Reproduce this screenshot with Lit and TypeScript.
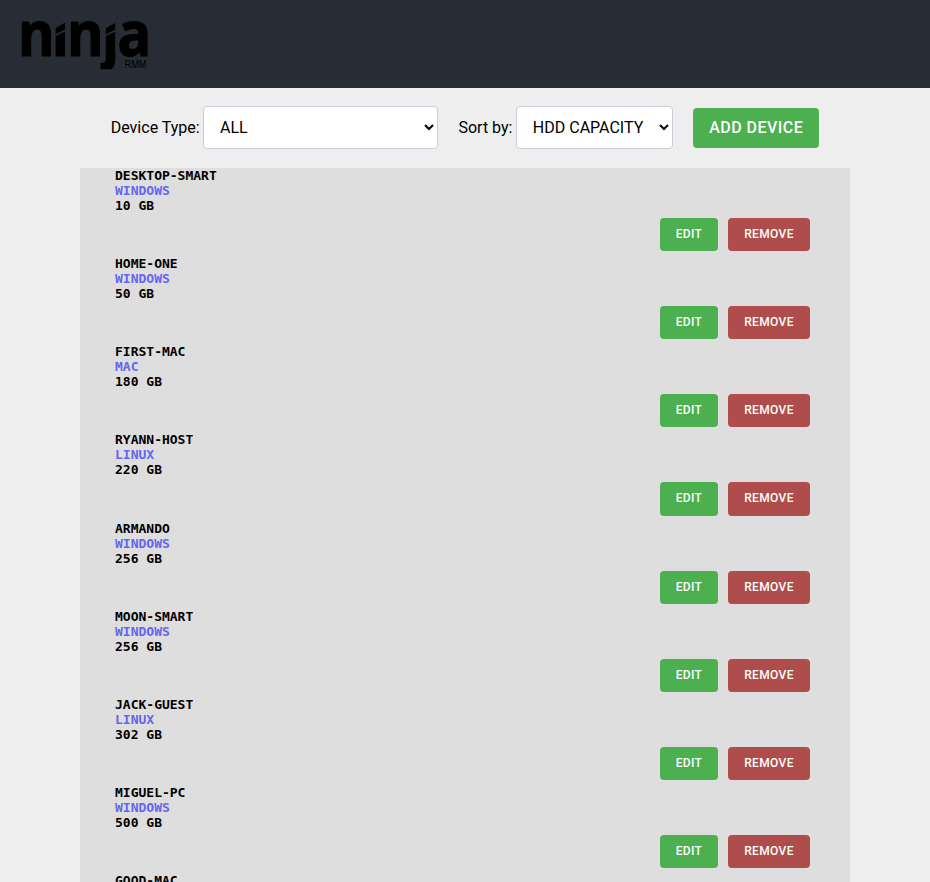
import { LitElement, html, css } from "lit";
import { customElement, property } from "lit/decorators.js";

interface Device {
  name: string;
  type: string;
  capacity: number;
}

const DEVICES: Device[] = [
  { name: "DESKTOP-SMART", type: "WINDOWS", capacity: 10 },
  { name: "HOME-ONE", type: "WINDOWS", capacity: 50 },
  { name: "FIRST-MAC", type: "MAC", capacity: 180 },
  { name: "RYANN-HOST", type: "LINUX", capacity: 220 },
  { name: "ARMANDO", type: "WINDOWS", capacity: 256 },
  { name: "MOON-SMART", type: "WINDOWS", capacity: 256 },
  { name: "JACK-GUEST", type: "LINUX", capacity: 302 },
  { name: "MIGUEL-PC", type: "WINDOWS", capacity: 500 },
  { name: "GOOD-MAC", type: "MAC", capacity: 512 },
];

@customElement("ninja-logo")
export class NinjaLogo extends LitElement {
  static styles = css`
    :host { display: block; width: 126px; height: 50px; }
    svg { display: block; overflow: visible; }
    .word { font-family: "Open Sans", sans-serif; font-weight: 700; font-size: 62px; stroke: #000; stroke-width: 1.2px; }
    .sub { font-family: "Liberation Sans", sans-serif; font-size: 10px; }
    .cut { fill: #282c34; }
  `;
  render() {
    return html`<svg width="126" height="50" viewBox="0 0 126 50" aria-label="ninja RMM">
      <defs><clipPath id="band"><rect x="-4" y="0.6" width="134" height="48.6" /></clipPath></defs>
      <g clip-path="url(#band)">
        <text class="word" transform="scale(.9 1)" x="-4.5 33.2 50 89 106.2" y="35.6">ninja</text>
      </g>
      <polygon class="cut" points="33,0 45,0 45,1.5 33,8.5" />
      <polygon class="cut" points="33,14.5 45,8.5 45,10.5 33,16.5" />
      <polygon class="cut" points="83,0 96,0 96,1.5 83,8.5" />
      <polygon class="cut" points="83,14.5 96,8.5 96,10.5 83,16.5" />
      <polygon class="cut" points="75,38 78.5,38 78.5,50 75,50" />
      <text class="sub" x="102.5" y="47.5" textLength="22" lengthAdjust="spacingAndGlyphs">RMM</text>
    </svg>`;
  }
}

@customElement("device-row")
export class DeviceRow extends LitElement {
  @property({ attribute: false }) device!: Device;
  static styles = css`
    :host { display: block; height: 88.14px; box-sizing: border-box; padding: 0 40px 0 35px; }
    .info { font: bold 13px/15px "DejaVu Sans Mono", monospace; }
    .type { color: #6565f0; }
    .actions { display: flex; justify-content: flex-end; gap: 10px; padding-top: 5px; }
    button {
      height: 33.14px; padding: 0 0 1.14px; border: 0; border-radius: 4px; color: #fff;
      box-sizing: border-box;
      font: 500 12px/14px Roboto, sans-serif; letter-spacing: .36px;
    }
    .edit { width: 58px; background: #4caf50; }
    .remove { width: 82px; background: #af4c4c; }
  `;
  render() {
    return html`
      <div class="info">
        <div>${this.device.name}</div>
        <div class="type">${this.device.type}</div>
        <div>${this.device.capacity} GB</div>
      </div>
      <div class="actions">
        <button class="edit">EDIT</button>
        <button class="remove">REMOVE</button>
      </div>`;
  }
}

@customElement("app-root")
export class AppRoot extends LitElement {
  static styles = css`
    :host {
      display: flex; flex-direction: column; height: 882px; overflow: hidden;
      background: #eee; color: #000; font: 16px/19px Roboto, sans-serif;
    }
    header { flex: none; height: 88px; box-sizing: border-box; padding: 20px 22px; background: #282c34; }
    .controls {
      flex: none; height: 80px; box-sizing: border-box; padding-bottom: 1px;
      display: flex; align-items: center; justify-content: center; gap: 20px;
    }
    label { display: flex; align-items: center; gap: 3.8px; white-space: nowrap; }
    select {
      height: 43px; box-sizing: border-box; padding: 0 0 0 11.6px; border: 1px solid #cacedb;
      border-radius: 4px; background: #fff; color: #000; font: 16px Roboto, sans-serif;
    }
    .kind { width: 235px; }
    .sort { width: 157px; }
    .add {
      width: 126px; height: 40px; padding: 0; border: 0; border-radius: 4px;
      background: #4caf50; color: #fff; font: 500 16px/19px Roboto, sans-serif; letter-spacing: .48px;
    }
    main { flex: 1; min-height: 0; overflow: hidden; margin: 0 80px; background: #dedede; }
  `;
  render() {
    return html`
      <header><ninja-logo></ninja-logo></header>
      <div class="controls">
        <label>Device Type: <select class="kind"><option>ALL</option></select></label>
        <label>Sort by: <select class="sort"><option>HDD CAPACITY</option></select></label>
        <button class="add">ADD DEVICE</button>
      </div>
      <main>${DEVICES.map((d) => html`<device-row .device=${d}></device-row>`)}</main>`;
  }
}
